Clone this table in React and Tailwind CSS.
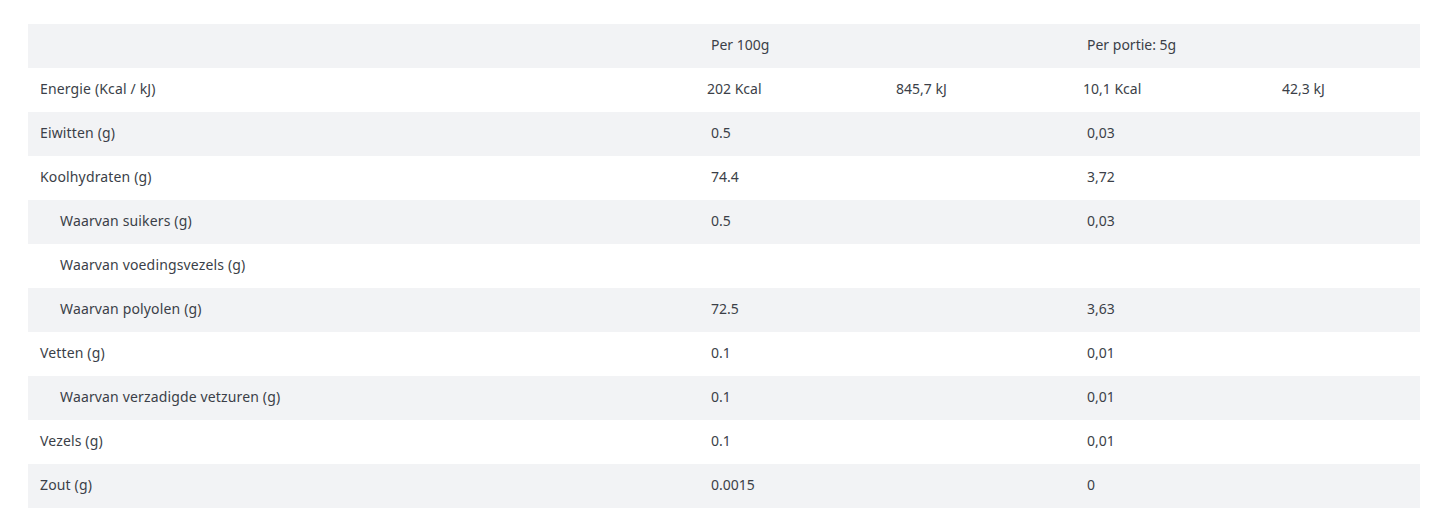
import React from 'react';

const rows = [
  { label: 'Energie (Kcal / kJ)', energy: ['202 Kcal', '845,7 kJ', '10,1 Kcal', '42,3 kJ'] },
  { label: 'Eiwitten (g)', per100: '0.5', portion: '0,03' },
  { label: 'Koolhydraten (g)', per100: '74.4', portion: '3,72' },
  { label: 'Waarvan suikers (g)', per100: '0.5', portion: '0,03', sub: true },
  { label: 'Waarvan voedingsvezels (g)', per100: '', portion: '', sub: true },
  { label: 'Waarvan polyolen (g)', per100: '72.5', portion: '3,63', sub: true },
  { label: 'Vetten (g)', per100: '0.1', portion: '0,01' },
  { label: 'Waarvan verzadigde vetzuren (g)', per100: '0.1', portion: '0,01', sub: true },
  { label: 'Vezels (g)', per100: '0.1', portion: '0,01' },
  { label: 'Zout (g)', per100: '0.0015', portion: '0' },
];

const grid = 'grid grid-cols-[667px_189px_187px_199px_150px] h-[44px] items-center';

export default function App() {
  return (
    <div className="min-h-screen bg-white pt-[24px] pl-[28px] text-[14px] leading-[18px] text-[#3b3f48]" style={{ fontFamily: '"Noto Sans", "Open Sans", sans-serif' }}>
      <div className="w-[1392px]">
        {/* kop */}
        <div className={`${grid} bg-[#f2f3f5]`}>
          <div className="pl-3"></div>
          <div className="col-span-2 pl-4 pb-[3px]">Per 100g</div>
          <div className="col-span-2 pl-4 pb-[3px]">Per portie: 5g</div>
        </div>

        {rows.map((r, i) => (
          <div key={r.label} className={`${grid} ${i % 2 === 1 ? 'bg-[#f2f3f5]' : 'bg-white'}`}>
            <div className={`${r.sub ? 'pl-8' : 'pl-3'} pb-[3px] tracking-[0.15px]`}>{r.label}</div>
            {r.energy ? (
              r.energy.map((v) => (
                <div key={v} className="pl-3 pb-[3px]">{v}</div>
              ))
            ) : (
              <>
                <div className="col-span-2 pl-4 pb-[3px]">{r.per100}</div>
                <div className="col-span-2 pl-4 pb-[3px]">{r.portion}</div>
              </>
            )}
          </div>
        ))}
      </div>
    </div>
  );
}
